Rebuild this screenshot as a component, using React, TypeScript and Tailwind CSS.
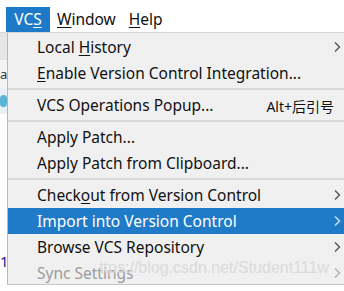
import React from 'react';

type Item = {
	label: React.ReactNode;
	arrow?: boolean;
	shortcut?: string;
	active?: boolean;
	disabled?: boolean;
	sepAfter?: boolean;
};

const U = ({ c }: { c: string }) => <span className="underline underline-offset-2">{c}</span>;

const items: Item[] = [
	{ label: <>Local <U c="H" />istory</>, arrow: true },
	{ label: <><U c="E" />nable Version Control Integration...</>, sepAfter: true },
	{ label: 'VCS Operations Popup...', shortcut: 'Alt+后引号', sepAfter: true },
	{ label: 'Apply Patch...' },
	{ label: 'Apply Patch from Clipboard...', sepAfter: true },
	{ label: <>Check<U c="o" />ut from Version Control</>, arrow: true },
	{ label: 'Import into Version Control', arrow: true, active: true },
	{ label: 'Browse VCS Repository', arrow: true },
	{ label: 'Sync Settings', arrow: true, disabled: true },
];

const Arrow = ({ color }: { color: string }) => (
	<svg width="7" height="11" viewBox="0 0 7 11" className="absolute right-[3px] top-1/2 -translate-y-1/2">
		<path d="M1 1 L5.5 5.5 L1 10" fill="none" stroke={color} strokeWidth="1.4" />
	</svg>
);

const App = () => {
	return (
		<div
			className="w-[344px] h-[291px] bg-white overflow-hidden relative text-[15.5px]"
			style={{ fontFamily: '"Noto Sans", "Noto Sans CJK SC", sans-serif' }}
		>
			<div className="h-[7px] bg-white" />
			{/* menubar */}
			<div className="h-[26px] flex items-center border-b border-[#d6d6d6] text-[#111]">
				<div className="ml-[6px] h-full w-[44px] bg-[#1c7ac8] text-white flex items-center justify-center">
					VC<U c="S" />
				</div>
				<div className="ml-[7px]"><U c="W" />indow</div>
				<div className="ml-[13px]"><U c="H" />elp</div>
			</div>

			<div className="flex">
				{/* left strip of window behind */}
				<div className="w-[7px] flex flex-col">
					<div className="h-[27px] bg-[#e6e6e6]" />
					<div className="h-[28px] bg-[#f4f4f4] text-[13px] leading-[28px] text-[#333] overflow-hidden">a</div>
					<div className="h-[26px] bg-[#e8f1f6] flex items-center"><div className="w-[8px] h-[12px] rounded-full bg-[#5ab4d6]" /></div>
					<div className="h-[140px] bg-white" />
					<div className="text-[#1a1a8c] text-[15px] leading-none">1</div>
				</div>

				{/* dropdown */}
				<div className="flex-1 h-[252px] bg-[#f0f0f0] border-l border-[#b8b8b8] border-b border-b-[#c4c4c4] pt-[1px] relative text-[#111]">
					{items.map((it, i) => (
						<div key={i}>
							<div
								className={
									'relative h-[26px] flex items-center pl-[29px] ' +
									(it.active ? 'bg-[#1f7bc8] text-white' : '') +
									(it.disabled ? ' text-[#9c9c9c]' : '')
								}
							>
								<span className="translate-y-[1px]">{it.label}</span>
								{it.shortcut && (
									<span className="absolute right-[10px] text-[14px] translate-y-[1px]">{it.shortcut}</span>
								)}
								{it.arrow && <Arrow color={it.active ? '#cfe3f4' : it.disabled ? '#b0b0b0' : '#555'} />}
							</div>
							{it.sepAfter && <div className="h-[6px] flex items-center"><div className="h-[2px] w-full bg-[#d9d9d9]" /></div>}
						</div>
					))}
					<div
						className="absolute right-[15px] bottom-[8px] text-[16px] text-[#dadada] leading-none"
						style={{ fontFamily: '"Liberation Sans", sans-serif' }}
					>
						ttps://blog.csdn.net/Student111w
					</div>
				</div>
			</div>
		</div>
	);
};

export default App;
